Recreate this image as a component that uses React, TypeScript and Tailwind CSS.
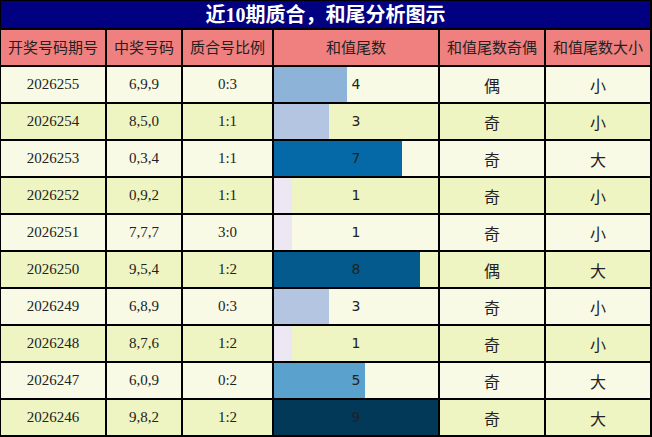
import React from "react";

const rows = [
  { q: "2026255", n: "6,9,9", r: "0:3", v: 4, c: "#8db3d8", oe: "偶", bs: "小" },
  { q: "2026254", n: "8,5,0", r: "1:1", v: 3, c: "#b4c5e1", oe: "奇", bs: "小" },
  { q: "2026253", n: "0,3,4", r: "1:1", v: 7, c: "#0569a8", oe: "奇", bs: "大" },
  { q: "2026252", n: "0,9,2", r: "1:1", v: 1, c: "#ede7f3", oe: "奇", bs: "小" },
  { q: "2026251", n: "7,7,7", r: "3:0", v: 1, c: "#ede7f3", oe: "奇", bs: "小" },
  { q: "2026250", n: "9,5,4", r: "1:2", v: 8, c: "#045a8d", oe: "偶", bs: "大" },
  { q: "2026249", n: "6,8,9", r: "0:3", v: 3, c: "#b4c5e1", oe: "奇", bs: "小" },
  { q: "2026248", n: "8,7,6", r: "1:2", v: 1, c: "#ede7f3", oe: "奇", bs: "小" },
  { q: "2026247", n: "6,0,9", r: "0:2", v: 5, c: "#5ba1cd", oe: "奇", bs: "大" },
  { q: "2026246", n: "9,8,2", r: "1:2", v: 9, c: "#023858", oe: "奇", bs: "大" },
];

const headers = ["开奖号码期号", "中奖号码", "质合号比例", "和值尾数", "和值尾数奇偶", "和值尾数大小"];

const serif = "font-['Liberation_Serif','Noto_Sans_CJK_SC',serif]";
const cjk = "font-['Noto_Sans_CJK_SC',sans-serif]";

export default function App() {
  return (
    <div className="w-[652px] h-[437px] bg-black pl-[1px] pt-[1px] pr-[2px] pb-[2px] grid grid-cols-[104px_74px_89px_164px_104px_104px] grid-rows-[27px_repeat(11,35px)] gap-[2px]">
      <div className={`col-span-6 bg-[#000080] text-white font-bold text-[20px] flex items-center justify-center leading-none ${serif}`}>
        近10期质合，和尾分析图示
      </div>
      {headers.map((h) => (
        <div key={h} className={`bg-[#f08080] text-[#222] text-[15px] flex items-center justify-center ${cjk}`}>
          {h}
        </div>
      ))}
      {rows.map((row, i) => {
        const bg = i % 2 === 0 ? "bg-[#f8fae6]" : "bg-[#eff4c3]";
        const pct = (row.v / 9) * 100;
        return (
          <React.Fragment key={row.q}>
            <div className={`${bg} flex items-center justify-center text-[15px] text-[#222] ${serif}`}>{row.q}</div>
            <div className={`${bg} flex items-center justify-center text-[15px] text-[#222] ${serif}`}>{row.n}</div>
            <div className={`${bg} flex items-center justify-center text-[15px] text-[#222] ${serif}`}>{row.r}</div>
            <div
              className={`${bg} flex items-center justify-center text-[14px] text-[#222] font-['DejaVu_Sans',sans-serif]`}
              style={{ backgroundImage: `linear-gradient(to right, ${row.c} ${pct}%, transparent ${pct}%)` }}
            >
              {row.v}
            </div>
            <div className={`${bg} flex items-center justify-center text-[16px] text-[#222] ${cjk}`}>{row.oe}</div>
            <div className={`${bg} flex items-center justify-center text-[16px] text-[#222] ${cjk}`}>{row.bs}</div>
          </React.Fragment>
        );
      })}
    </div>
  );
}
